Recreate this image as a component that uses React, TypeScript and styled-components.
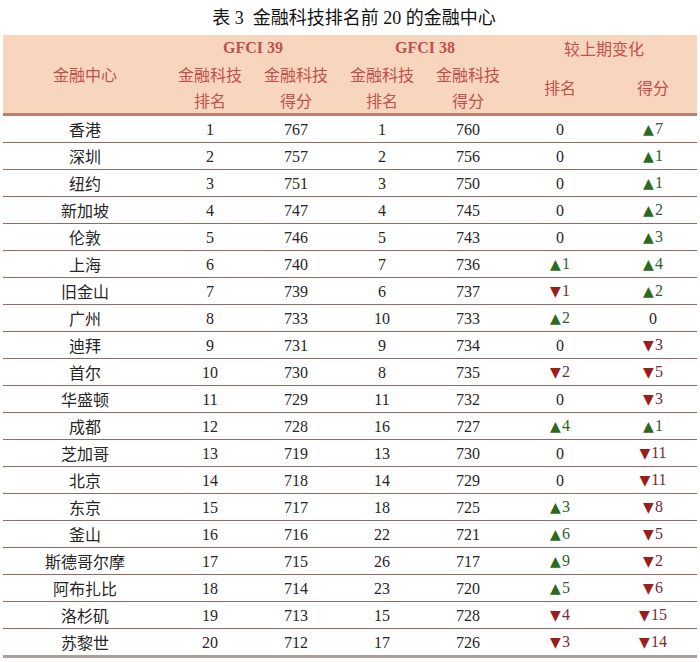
import React from 'react';
import styled, { createGlobalStyle } from 'styled-components';

const GlobalStyle = createGlobalStyle`
    html, body {
        margin: 0;
        padding: 0;
        background: #ffffff;
    }
`;

type Change = { dir: 'up' | 'down' | 'none'; value: number };

type Row = {
    city: string;
    rank39: number;
    score39: number;
    rank38: number;
    score38: number;
    rankChange: Change;
    scoreChange: Change;
};

const ch = (v: number): Change => ({ dir: v > 0 ? 'up' : v < 0 ? 'down' : 'none', value: Math.abs(v) });

const rows: Row[] = [
    ['香港', 1, 767, 1, 760, 0, 7],
    ['深圳', 2, 757, 2, 756, 0, 1],
    ['纽约', 3, 751, 3, 750, 0, 1],
    ['新加坡', 4, 747, 4, 745, 0, 2],
    ['伦敦', 5, 746, 5, 743, 0, 3],
    ['上海', 6, 740, 7, 736, 1, 4],
    ['旧金山', 7, 739, 6, 737, -1, 2],
    ['广州', 8, 733, 10, 733, 2, 0],
    ['迪拜', 9, 731, 9, 734, 0, -3],
    ['首尔', 10, 730, 8, 735, -2, -5],
    ['华盛顿', 11, 729, 11, 732, 0, -3],
    ['成都', 12, 728, 16, 727, 4, 1],
    ['芝加哥', 13, 719, 13, 730, 0, -11],
    ['北京', 14, 718, 14, 729, 0, -11],
    ['东京', 15, 717, 18, 725, 3, -8],
    ['釜山', 16, 716, 22, 721, 6, -5],
    ['斯德哥尔摩', 17, 715, 26, 717, 9, -2],
    ['阿布扎比', 18, 714, 23, 720, 5, -6],
    ['洛杉矶', 19, 713, 15, 728, -4, -15],
    ['苏黎世', 20, 712, 17, 726, -3, -14],
].map(([city, r39, s39, r38, s38, rc, sc]) => ({
    city: city as string,
    rank39: r39 as number,
    score39: s39 as number,
    rank38: r38 as number,
    score38: s38 as number,
    rankChange: ch(rc as number),
    scoreChange: ch(sc as number),
}));

const CJK = `"Noto Sans CJK SC", "Noto Sans", sans-serif`;
const SERIF = `"Liberation Serif", "Noto Sans CJK SC", serif`;

const Page = styled.div`
    width: 700px;
    padding: 0 3px;
    box-sizing: border-box;
`;

const Title = styled.h1`
    margin: 0;
    height: 35px;
    line-height: 36px;
    text-align: center;
    font-family: ${SERIF};
    font-size: 18px;
    font-weight: 400;
    color: #111;
    padding-left: 8px;
`;

const Table = styled.table`
    width: 694px;
    border-collapse: collapse;
    table-layout: fixed;
`;

const HeadRow = styled.tr`
    background: #f7d6bd;
`;

const HeadCell = styled.th<{ $latin?: boolean; $tall?: boolean }>`
    padding: 0;
    height: ${(p) => (p.$tall ? 49 : 26)}px;
    line-height: 26px;
    text-align: center;
    vertical-align: middle;
    color: #c0504d;
    font-family: ${(p) => (p.$latin ? SERIF : CJK)};
    font-weight: ${(p) => (p.$latin ? 700 : 400)};
    font-size: 16px;
`;

const BodyRow = styled.tr<{ $first?: boolean; $last?: boolean }>`
    td {
        border-top: ${(p) => (p.$first ? '3px solid #b98070' : 'none')};
        border-bottom: ${(p) => (p.$last ? '3px solid #ad9d9b' : '1px solid #916a62')};
    }
`;

const Cell = styled.td<{ $cjk?: boolean }>`
    padding: 0;
    height: 26px;
    text-align: center;
    vertical-align: middle;
    color: #262626;
    font-family: ${(p) => (p.$cjk ? CJK : SERIF)};
    font-size: 16px;
    line-height: 25px;
`;

const Delta = styled.span<{ $dir: 'up' | 'down' }>`
    color: ${(p) => (p.$dir === 'up' ? '#2f5f2a' : '#7a2a2a')};
`;

const Arrow = styled.span<{ $dir: 'up' | 'down' }>`
    color: ${(p) => (p.$dir === 'up' ? '#2d6a1f' : '#9a1e1e')};
    font-family: "DejaVu Sans", sans-serif;
    font-size: 14px;
    margin-right: 1px;
`;

const ChangeValue = ({ c }: { c: Change }) => {
    if (c.dir === 'none') return <>0</>;
    return (
        <Delta $dir={c.dir}>
            <Arrow $dir={c.dir}>{c.dir === 'up' ? '▲' : '▼'}</Arrow>
            {c.value}
        </Delta>
    );
};

const App = () => {
    return (
        <Page>
            <GlobalStyle />
            <Title>表 3 &nbsp;金融科技排名前 20 的金融中心</Title>
            <Table>
                <colgroup>
                    <col style={{ width: 164 }} />
                    <col style={{ width: 86 }} />
                    <col style={{ width: 86 }} />
                    <col style={{ width: 86 }} />
                    <col style={{ width: 86 }} />
                    <col style={{ width: 98 }} />
                    <col style={{ width: 88 }} />
                </colgroup>
                <thead>
                    <HeadRow>
                        <HeadCell rowSpan={2}>金融中心</HeadCell>
                        <HeadCell colSpan={2} $latin>
                            GFCI 39
                        </HeadCell>
                        <HeadCell colSpan={2} $latin>
                            GFCI 38
                        </HeadCell>
                        <HeadCell colSpan={2}>较上期变化</HeadCell>
                    </HeadRow>
                    <HeadRow>
                        <HeadCell $tall>
                            金融科技
                            <br />
                            排名
                        </HeadCell>
                        <HeadCell $tall>
                            金融科技
                            <br />
                            得分
                        </HeadCell>
                        <HeadCell $tall>
                            金融科技
                            <br />
                            排名
                        </HeadCell>
                        <HeadCell $tall>
                            金融科技
                            <br />
                            得分
                        </HeadCell>
                        <HeadCell $tall>排名</HeadCell>
                        <HeadCell $tall>得分</HeadCell>
                    </HeadRow>
                </thead>
                <tbody>
                    {rows.map((r, i) => (
                        <BodyRow key={r.city} $first={i === 0} $last={i === rows.length - 1}>
                            <Cell $cjk>{r.city}</Cell>
                            <Cell>{r.rank39}</Cell>
                            <Cell>{r.score39}</Cell>
                            <Cell>{r.rank38}</Cell>
                            <Cell>{r.score38}</Cell>
                            <Cell>
                                <ChangeValue c={r.rankChange} />
                            </Cell>
                            <Cell>
                                <ChangeValue c={r.scoreChange} />
                            </Cell>
                        </BodyRow>
                    ))}
                </tbody>
            </Table>
        </Page>
    );
};

export default App;
